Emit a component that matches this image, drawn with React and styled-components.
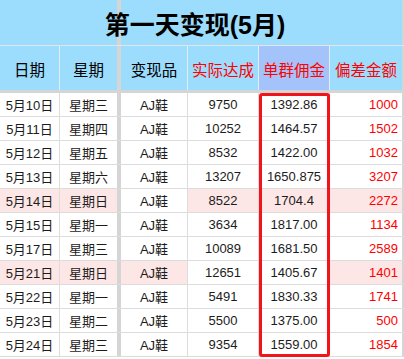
import React from "react";
import styled, { createGlobalStyle } from "styled-components";

const Global = createGlobalStyle`
  html, body { margin: 0; padding: 0; background: #fff; }
  body { font-family: "Liberation Sans", "Noto Sans CJK SC", sans-serif; }
`;

const BLUE = "#9cdcfd";
const SEP = "#d5d5d5";
const LINE = "#dcdcdc";

const Sheet = styled.div`
  position: relative;
  width: 404px;
  height: 359px;
  overflow: hidden;
  background: #fff;
`;

const TitleRow = styled.div`
  height: 46px;
  border-bottom: 1px solid #e4e4e4;
  background: linear-gradient(
    to right,
    ${BLUE} 0 117px,
    ${SEP} 117px 121px,
    ${BLUE} 121px 402px,
    ${SEP} 402px 404px
  );
  display: flex;
  align-items: center;
  justify-content: center;
  padding-right: 14px;
  box-sizing: border-box;
  font-family: "Liberation Sans", "Noto Sans CJK SC", sans-serif;
  font-weight: 700;
  font-size: 25px;
  color: #000;
`;

const Row = styled.div`
  display: flex;
  height: ${(p) => p.$h}px;
  box-sizing: border-box;
  border-bottom: ${(p) => (p.$line ? `1px solid ${LINE}` : "none")};
`;

const Cell = styled.div`
  width: ${(p) => p.$w}px;
  flex: none;
  box-sizing: border-box;
  display: flex;
  align-items: center;
  justify-content: ${(p) => (p.$right ? "flex-end" : "center")};
  padding-right: ${(p) => (p.$right ? "4px" : "0")};
  border-right: ${(p) => (p.$noBorder ? "none" : `1px solid ${p.$lineColor || LINE}`)};
  background: ${(p) => p.$bg || "#fff"};
  color: ${(p) => p.$color || "#1c1c1c"};
  font-size: 13px;
  white-space: nowrap;
`;

const HeadCell = styled(Cell)`
  font-family: "Noto Sans CJK SC", "Liberation Sans", sans-serif;
  font-size: 15.5px;
  padding-top: 2px;
`;

const VSep = styled.div`
  width: ${(p) => p.$w}px;
  flex: none;
  background: ${SEP};
`;

const HSep = styled.div`
  height: 3px;
  background: ${SEP};
`;

const RedBox = styled.div`
  position: absolute;
  left: 259px;
  top: 93px;
  width: 71px;
  height: 264px;
  box-sizing: border-box;
  border: 3px solid #f2141b;
  border-radius: 3px;
  pointer-events: none;
`;

const COLS = [60, 57, 67, 71, 71, 72];
const PINK = "#fde6e6";

const headers = [
  { t: "日期" },
  { t: "星期" },
  { t: "变现品" },
  { t: "实际达成", red: true },
  { t: "单群佣金", red: true, bg: "#a3c3fa" },
  { t: "偏差金额", red: true },
];

const rows = [
  ["5月10日", "星期三", "AJ鞋", "9750", "1392.86", "1000", []],
  ["5月11日", "星期四", "AJ鞋", "10252", "1464.57", "1502", []],
  ["5月12日", "星期五", "AJ鞋", "8532", "1422.00", "1032", []],
  ["5月13日", "星期六", "AJ鞋", "13207", "1650.875", "3207", []],
  ["5月14日", "星期日", "AJ鞋", "8522", "1704.4", "2272", [0, 1, 3, 4, 5]],
  ["5月15日", "星期一", "AJ鞋", "3634", "1817.00", "1134", []],
  ["5月17日", "星期三", "AJ鞋", "10089", "1681.50", "2589", []],
  ["5月21日", "星期日", "AJ鞋", "12651", "1405.67", "1401", [0, 1, 2, 5]],
  ["5月22日", "星期一", "AJ鞋", "5491", "1830.33", "1741", []],
  ["5月23日", "星期二", "AJ鞋", "5500", "1375.00", "500", []],
  ["5月24日", "星期三", "AJ鞋", "9354", "1559.00", "1854", []],
];

function renderCells(values, render) {
  const out = [];
  values.forEach((v, i) => {
    out.push(render(v, i));
    if (i === 1) out.push(<VSep key={`sep-${i}`} $w={4} />);
  });
  out.push(<VSep key="edge" $w={2} />);
  return out;
}

export default function App() {
  return (
    <>
      <Global />
      <Sheet>
        <TitleRow>第一天变现(5月)</TitleRow>
        <Row $h={44}>
          {renderCells(headers, (h, i) => (
            <HeadCell
              key={i}
              $w={COLS[i]}
              $bg={h.bg || BLUE}
              $color={h.red ? "#ff0000" : "#000"}
              $lineColor="#e3eef4"
              $noBorder={i === 1 || i === 5}
            >
              {h.t}
            </HeadCell>
          ))}
        </Row>
        <HSep />
        {rows.map((r, ri) => {
          const pink = r[6];
          return (
            <Row key={ri} $h={24} $line>
              {renderCells(r.slice(0, 6), (v, i) => (
                <Cell
                  key={i}
                  $w={COLS[i]}
                  $bg={pink.includes(i) ? PINK : "#fff"}
                  $color={i === 5 ? "#ff0000" : undefined}
                  $right={i === 5}
                  $noBorder={i === 1 || i === 5}
                >
                  {v}
                </Cell>
              ))}
            </Row>
          );
        })}
        <RedBox />
      </Sheet>
    </>
  );
}
